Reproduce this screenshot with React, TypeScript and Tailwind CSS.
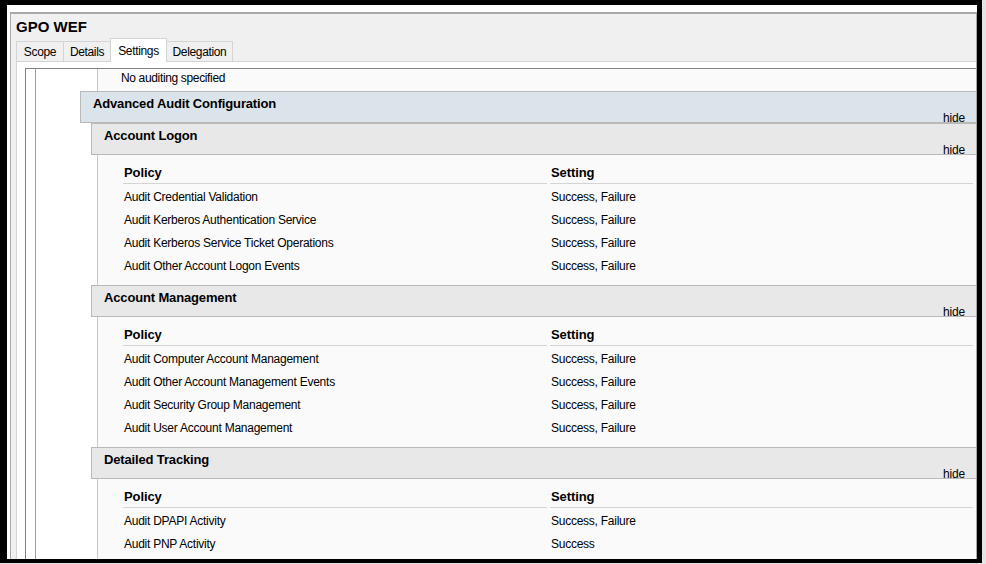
import React from "react";

type Row = [string, string];

interface Section {
  title: string;
  rows: Row[];
}

const SECTIONS: Section[] = [
  {
    title: "Account Logon",
    rows: [
      ["Audit Credential Validation", "Success, Failure"],
      ["Audit Kerberos Authentication Service", "Success, Failure"],
      ["Audit Kerberos Service Ticket Operations", "Success, Failure"],
      ["Audit Other Account Logon Events", "Success, Failure"],
    ],
  },
  {
    title: "Account Management",
    rows: [
      ["Audit Computer Account Management", "Success, Failure"],
      ["Audit Other Account Management Events", "Success, Failure"],
      ["Audit Security Group Management", "Success, Failure"],
      ["Audit User Account Management", "Success, Failure"],
    ],
  },
  {
    title: "Detailed Tracking",
    rows: [
      ["Audit DPAPI Activity", "Success, Failure"],
      ["Audit PNP Activity", "Success"],
    ],
  },
];

const TABS = [
  { label: "Scope", w: "w-[47px] border-l" },
  { label: "Details", w: "w-[47px] border-l" },
  { label: "Settings", w: "w-[57px] border-l border-r", active: true },
  { label: "Delegation", w: "w-[66px] border-r" },
];

function Header({ title, className }: { title: string; className: string }) {
  return (
    <div className={`h-[32px] border-y border-l border-[#b9b9b9] flex flex-col ${className}`}>
      <div className="pt-[4px] pl-[12px] text-[13px] leading-[15px] font-bold tracking-[-0.15px]">{title}</div>
      <div className="mt-[2px] pr-[11px] text-right text-[12px] leading-[11px] tracking-[-0.2px]">hide</div>
    </div>
  );
}

function PolicyTable({ rows }: { rows: Row[] }) {
  return (
    <div className="ml-[61px] h-[130px] border-l border-[#c4c4c4] bg-[#fafafa] pl-[25px] pr-[3px] pt-[7px]">
      <div className="flex gap-[3px] h-[22px] text-[13px] leading-[21px] font-bold tracking-[-0.1px]">
        <div className="w-[424px] border-b border-[#d4d4d4] pl-[1px]">Policy</div>
        <div className="flex-1 border-b border-[#d4d4d4] pl-[1px]">Setting</div>
      </div>
      <div className="mt-[2px] text-[12px] leading-[23px] tracking-[-0.25px]">
        {rows.map(([policy, setting]) => (
          <div key={policy} className="flex gap-[3px] h-[23px]">
            <div className="w-[424px] pl-[1px]">{policy}</div>
            <div className="flex-1 pl-[1px]">{setting}</div>
          </div>
        ))}
      </div>
    </div>
  );
}

export default function App() {
  return (
    <div className="w-[986px] h-[564px] bg-[#e4e4e4] text-black font-['Liberation_Sans',Arial,sans-serif]">
      <div className="w-[982px] h-[563px] border-l-[7px] border-t-[5px] border-r-[5px] border-b-[4px] border-black bg-white pl-[3px] pt-[7px] flex flex-col">
        <div className="flex-1 min-h-0 flex flex-col overflow-hidden bg-[#f0f0f0] border-l border-r border-t-2 border-[#a8a8a8]">
          <div className="pl-[5px] pt-[4px] text-[15px] leading-[18px] font-bold">GPO WEF</div>

          {/* tab strip */}
          <div className="relative z-10 mt-[2px] h-[23px] pl-[5px] flex items-end text-[12px] tracking-[-0.35px]">
            {TABS.map((t) =>
              t.active ? (
                <div
                  key={t.label}
                  className={`${t.w} h-[24px] -mb-px border-t border-[#d4d4d4] bg-white flex items-center justify-center`}
                >
                  {t.label}
                </div>
              ) : (
                <div
                  key={t.label}
                  className={`${t.w} h-[20px] border-t border-[#d4d4d4] bg-[#f0f0f0] flex items-center justify-center pt-[1px]`}
                >
                  {t.label}
                </div>
              )
            )}
          </div>

          {/* tab pane */}
          <div className="flex-1 min-h-0 ml-[5px] border-l border-t border-[#d4d4d4] bg-white pt-[6px] pl-[8px]">
            <div className="h-full border-l border-t border-[#828282] bg-white pl-[9px]">
              <div className="h-full border-l border-[#a0a0a0]">
                <div className="ml-[61px] h-[22px] border-l border-[#c4c4c4] bg-[#fafafa] pl-[23px] pt-[2px] text-[12px] leading-[15px] tracking-[-0.35px]">
                  No auditing specified
                </div>
                <Header title="Advanced Audit Configuration" className="ml-[44px] bg-[#dbe4eb]" />
                {SECTIONS.map((s) => (
                  <div key={s.title}>
                    <Header title={s.title} className="ml-[55px] bg-[#e8e8e8]" />
                    <PolicyTable rows={s.rows} />
                  </div>
                ))}
              </div>
            </div>
          </div>
        </div>
      </div>
    </div>
  );
}
